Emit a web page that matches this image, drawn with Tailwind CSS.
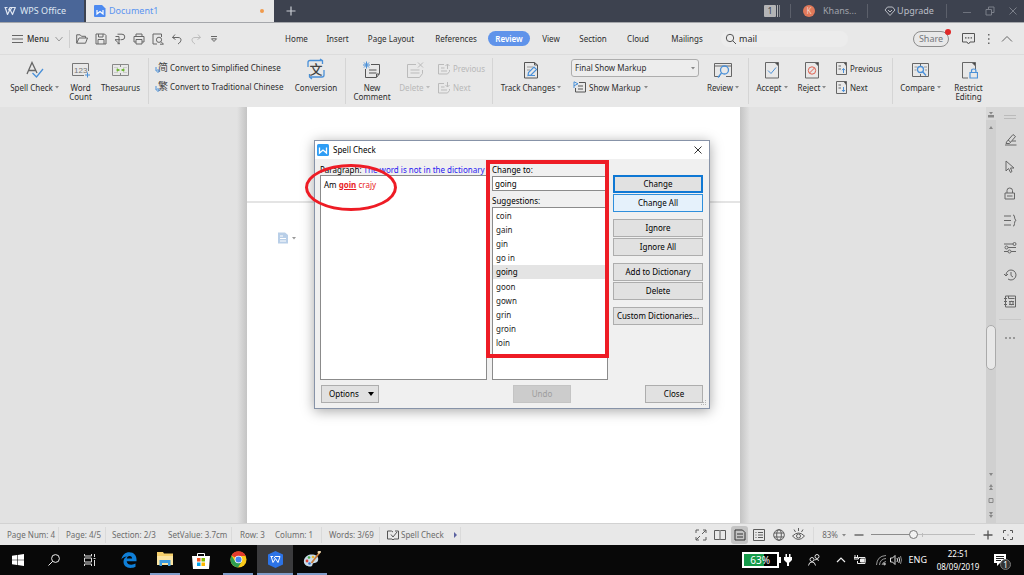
<!DOCTYPE html>
<html lang="en">
<head>
<meta charset="utf-8">
<meta name="viewport" content="width=device-width, initial-scale=1">
<title>Document1 - WPS Office</title>
<script src="https://cdn.jsdelivr.net/npm/@tailwindcss/browser@4"></script>
</head>
<body class="h-screen flex flex-col overflow-hidden bg-[#e2e2e2] font-['Noto_Sans','Open_Sans',sans-serif] text-[8px] leading-3 text-[#2d2d2d] whitespace-nowrap">

<!-- Title bar -->
<header class="h-[22px] shrink-0 flex items-stretch bg-[#3d424f] text-[#b9bcc4]">
  <button class="w-[84px] flex items-center gap-1 pl-1 bg-[#4a6698] text-[9px] text-[#dfe6f2]">
    <svg class="w-3 h-3" viewBox="0 0 12 12" fill="none" stroke="currentColor" stroke-width="1.2" stroke-linejoin="round"><path d="M.5 2.5h3M1.2 2.5l2.3 7 2.5-5 2.5 5L11.3 2.5H6L4.5 5.2M8 2.5l-1.3 2"/></svg>
    WPS Office
  </button>
  <div class="ml-0.5 w-[188px] flex items-center bg-[#e8e8e8] px-2 text-[9px] text-[#5b94f0]">
    <svg class="w-3 h-3 mr-[3px]" viewBox="0 0 12 12"><path d="M1 0h7l3.500 3.500V11a1 1 0 0 1-1 1H1a1 1 0 0 1-1-1V1a1 1 0 0 1 1-1z" fill="#4d8af0"/><path d="M3 5v4l3-2.500L9 9V5" fill="none" stroke="#fff" stroke-width="1.200"/></svg>
    <span class="grow">Document1</span>
    <span class="w-1 h-1 mr-0.5 rounded-full bg-[#f09a4c]"></span>
  </div>
  <button class="w-[34px] flex items-center justify-center" aria-label="New tab">
    <svg class="w-[10px] h-[10px]" viewBox="0 0 10 10" stroke="#c9ccd3" stroke-width="1.200"><path d="M5 .5v9M.5 5h9"/></svg>
  </button>
  <div class="grow"></div>
  <button class="flex items-center" aria-label="Open windows: 1">
    <span class="w-3 h-3 rounded-[1px] bg-[#b4b4b6] text-[#3d424f] text-[9px] text-center leading-3">1</span><span class="ml-px w-px h-3 bg-[#b4b4b6]"></span><span class="ml-px w-px h-3 bg-[#8b8d94]"></span>
  </button>
  <span class="w-px my-1 ml-2.5 bg-[#5c606b]"></span>
  <button class="w-[76px] flex items-center pl-3 gap-2 text-[9px] text-[#a0a3ab]">
    <span class="w-3 h-3 rounded-full bg-[#e0795a] text-[8px] leading-3 text-center text-[#f3cdbf]">K</span>Khans...
  </button>
  <span class="w-px my-1 bg-[#5c606b]"></span>
  <button class="w-[78px] flex items-center justify-center gap-px pl-1 text-[9px]">
    <svg class="w-3 h-3" viewBox="0 0 12 12" fill="none" stroke="currentColor" stroke-linejoin="round"><path d="M3.500 2h5L11 5l-5 5.500L1 5zM4 5l2 2 2-2"/></svg>Upgrade
  </button>
  <span class="w-px my-1 mr-4 bg-[#5c606b]"></span>
  <button aria-label="Minimize"><svg class="w-2 h-2.5" viewBox="0 0 8 10" stroke="#6e727d"><path d="M0 6.500h8"/></svg></button>
  <button class="ml-[14px]" aria-label="Restore"><svg class="w-2.5 h-2.5" viewBox="0 0 10 10" fill="none" stroke="#7b7f89"><path d="M1 3.500h5.500V9H1zM3.500 3.500V1H9v5.500H6.500"/></svg></button>
  <button class="ml-[13px] mr-1.5" aria-label="Close window"><svg class="w-2.5 h-2.5" viewBox="0 0 10 10" stroke="#7b7f89"><path d="M1.500 1.500l7 7M8.500 1.500l-7 7"/></svg></button>
</header>

<!-- Menu bar -->
<nav class="h-8 shrink-0 flex items-center border-t border-[#a5a7ab] bg-[#e8e8e8]">
  <button class="flex items-center w-[70px] h-[18px] pl-3 border-r border-[#cfcfcf]">
    <svg class="w-3 h-2.5" viewBox="0 0 12 10" stroke="#666"><path d="M0 1.500h11M0 5h11M0 8.500h11"/></svg>
    <span class="ml-[3px] w-7 text-left font-medium">Menu</span>
    <svg class="w-2 h-2" viewBox="0 0 8 8" fill="none" stroke="#999"><path d="M.5 2L4 6l3.500-4"/></svg>
  </button>
  <div class="flex items-center pl-1.5 gap-[7px] w-[206px] text-[#666]">
    <button aria-label="Open"><svg class="w-3 h-3" viewBox="0 0 12 12" fill="none" stroke="currentColor"><path d="M.7 10V1.800h3.500l1.300 1.500h4V5M.7 10.200L3 5h8.500L9.500 10.200z"/></svg></button>
    <button aria-label="Save"><svg class="w-3 h-3" viewBox="0 0 12 12" fill="none" stroke="currentColor"><path d="M1 1h8.500L11 2.500V11H1zM3.500 1v3h4.500V1M3 11V6.500h6V11"/></svg></button>
    <button aria-label="Export to PDF"><svg class="w-3 h-3" viewBox="0 0 12 12" fill="none" stroke="currentColor"><path d="M3.500 1.200H8a2.500 2.500 0 0 1 0 5.500H6.500M1.500 3.500h3.500v7L1 6.700h5M3.500 10.700H6"/></svg></button>
    <button aria-label="Print"><svg class="w-3 h-3" viewBox="0 0 12 12" fill="none" stroke="currentColor"><path d="M3 3.500V1h6v2.500M3 9H1V3.500h10V9H9M3 6.500h6V11H3z"/></svg></button>
    <button aria-label="Print preview"><svg class="w-3 h-3" viewBox="0 0 12 12" fill="none" stroke="currentColor"><path d="M5 11H1V1h8.500v3"/><circle cx="7" cy="6.800" r="2.600"/><path d="M9 8.700l2.500 2.500H8"/></svg></button>
    <button aria-label="Undo"><svg class="w-3 h-3" viewBox="0 0 12 12" fill="none" stroke="currentColor"><path d="M4 1.500L1.500 4.500l3 2M1.500 4.500H7c4 0 4 4 0 6.500"/></svg></button>
    <button aria-label="Redo" disabled class="text-[#bdbdbd]"><svg class="w-3 h-3" viewBox="0 0 12 12" fill="none" stroke="currentColor"><path d="M8 1.500l2.500 3-3 2M10.500 4.500H5c-4 0-4 4 0 6.500"/></svg></button>
    <button aria-label="Customize toolbar"><svg class="w-3 h-3" viewBox="0 0 12 12" fill="none" stroke="currentColor"><path d="M2 3.500h6M2.500 5.800L5 8.500l2.500-2.700z"/></svg></button>
  </div>
  <div class="flex items-center text-center">
    <button class="w-[41px]">Home</button>
    <button class="w-[41px]">Insert</button>
    <button class="w-[66px]">Page Layout</button>
    <button class="w-[64px]">References</button>
    <button class="w-[42px] h-[15px] mr-0.5 rounded-full bg-[#5f93ea] text-white font-semibold">Review</button>
    <button class="w-[38px]">View</button>
    <button class="w-[46px]">Section</button>
    <button class="w-[44px]">Cloud</button>
    <button class="w-[54px]">Mailings</button>
  </div>
  <label class="ml-[7px] w-[127px] h-4 flex items-center gap-0.5 px-1 rounded-full bg-[#ececec]">
    <svg class="w-3 h-3" viewBox="0 0 12 12" fill="none" stroke="#555"><circle cx="5" cy="5" r="3.700"/><path d="M7.700 7.700L11 11"/></svg>
    <input class="w-24 text-[9px] outline-none" value="mail" aria-label="Search commands">
  </label>
  <div class="grow"></div>
  <button class="relative w-9 h-4 rounded-full border border-[#8c8c8c] text-[9px] text-[#75777c]">Share<span class="absolute -top-[3px] -right-[3px] w-1.5 h-1.5 rounded-full bg-[#e02828]"></span></button>
  <button class="ml-[13px]" aria-label="Comments"><svg class="w-[13px] h-[13px]" viewBox="0 0 13 13" fill="none" stroke="#555"><path d="M.5 1.500h12v8.500H8L6.500 12 5 10H.5z"/><path d="M3 5.800h1.500M5.800 5.800h1.500M8.600 5.800H10" stroke-width="1.300"/></svg></button>
  <button class="ml-3" aria-label="More"><svg class="w-1 h-3" viewBox="0 0 4 12" fill="#666"><path d="M1 1h1.500v1.500H1zM1 5.200h1.500v1.500H1zM1 9.400h1.500v1.500H1z"/></svg></button>
  <button class="ml-2.5 mr-[11px]" aria-label="Collapse ribbon"><svg class="w-3 h-2" viewBox="0 0 12 8" fill="none" stroke="#666"><path d="M1 6.500l5-5 5 5"/></svg></button>
</nav>

<!-- Ribbon -->
<section class="h-[53px] shrink-0 flex items-stretch border-t border-[#dcdcdc] bg-[#e8e8e8] leading-[9px]" aria-label="Review ribbon">
  <div class="flex my-[3px] w-[149px] pl-[7px] border-r border-[#d5d5d5]">
    <button class="w-[55px] flex flex-col items-center pt-[3px] gap-1">
      <svg class="w-[18px] h-[18px]" viewBox="0 0 18 18" fill="none"><path d="M1 13L6 1.500 11 12M2.500 9.500h7" stroke="#666" stroke-width="1.300"/><path d="M6.500 12l4 4L17 8" stroke="#4a90d8" stroke-width="1.300"/></svg>
      <span>Spell Check <svg class="inline w-1 h-1 mb-1" viewBox="0 0 4 4" fill="#888"><path d="M0 1h4L2 3.500z"/></svg></span>
    </button>
    <button class="w-[37px] flex flex-col items-center pt-[3px] gap-1">
      <svg class="w-[20px] h-[18px]" viewBox="0 0 20 18" fill="none" stroke="#777"><path d="M13 14.500H1.500v-12h16V10"/><text x="3" y="12" font-size="8" font-family="Liberation Sans" fill="#777" stroke="none">123</text><path d="M16.500 11.500v5M14 14h5" stroke="#4a90d8"/></svg>
      <span>Word<br>Count</span>
    </button>
    <button class="w-[43px] flex flex-col items-center pt-[3px] gap-1">
      <svg class="w-[18px] h-[18px]" viewBox="0 0 18 18" fill="none" stroke="#888"><path d="M.5 3.500h16v11H.5zM8.500 3.500v2.500M8.500 12v2.500"/><path d="M2 6.500h4M11 6.500h4M2 11.500h4M11 11.500h4" stroke="#ccc"/><path d="M5 7.800L7.500 9 5 10.200zM12 7.800L9.500 9l2.500 1.200z" fill="#6ab42d" stroke="#6ab42d" stroke-width=".8"/></svg>
      <span>Thesaurus</span>
    </button>
  </div>
  <div class="flex my-[3px] w-[197px] pl-1.5 border-r border-[#d5d5d5]">
    <div class="w-[134px] flex flex-col items-start pt-0.5 gap-[5px]">
      <button class="flex items-center gap-px h-[14px]"><svg class="w-3.5 h-3.5 overflow-visible" viewBox="0 0 14 14" fill="none" stroke="#4a90d8"><text x="3" y="11" font-size="10" font-family="Noto Sans CJK SC" fill="#444" stroke="none">简</text><path d="M1 7v4h3M2.500 9L4.500 11l-2 2"/></svg>Convert to Simplified Chinese</button>
      <button class="flex items-center gap-px h-[14px]"><svg class="w-3.5 h-3.5 overflow-visible" viewBox="0 0 14 14" fill="none" stroke="#4a90d8"><text x="3" y="11" font-size="10" font-family="Noto Sans CJK TC" fill="#444" stroke="none">繁</text><path d="M1 7v4h3M2.500 9L4.500 11l-2 2"/></svg>Convert to Traditional Chinese</button>
    </div>
    <button class="w-[54px] flex flex-col items-center pt-px gap-1">
      <svg class="w-5 h-5 overflow-visible" viewBox="0 0 20 20" fill="none" stroke="#4a90d8" stroke-width="1.300"><path d="M2 8V3.500q0-2 2-2h12M14 0l2.500 1.500V5M18 11v5q0 2-2 2H4M6 20l-2.500-2V15"/><text x="3.500" y="14.500" font-size="13" font-family="Noto Sans CJK SC" font-weight="500" fill="#444" stroke="none">文</text></svg>
      <span>Conversion</span>
    </button>
  </div>
  <div class="flex my-[3px] w-[147px] pl-1.5 border-r border-[#d5d5d5]">
    <button class="w-10 flex flex-col items-center pt-[3px] gap-1">
      <svg class="w-[18px] h-[18px]" viewBox="0 0 18 18" fill="none" stroke="#555"><path d="M8 3.500h8.500v9l-3 4H2.500V8M6 9h7.500M6 12h7.500M16.500 13h-3v3"/><path d="M3.500.5v7M0 4h7M1 1.500l5 5M6 1.500l-5 5" stroke="#4a90d8"/></svg>
      <span>New<br>Comment</span>
    </button>
    <button disabled class="w-[45px] flex flex-col items-center pt-[3px] gap-1 text-[#b8b8b8]">
      <svg class="w-[18px] h-[18px]" viewBox="0 0 18 18" fill="none" stroke="#bbb"><path d="M10 3.500H1.500v13h12l3-4V9M4.500 9h9M4.500 12h9M12 1.500l5 5M17 1.500l-5 5"/></svg>
      <span>Delete <svg class="inline w-1 h-1 mb-1" viewBox="0 0 4 4" fill="#bbb"><path d="M0 1h4L2 3.500z"/></svg></span>
    </button>
    <div class="flex flex-col items-start pl-px pt-1 gap-1.5 text-[#b8b8b8]">
      <button disabled class="flex items-center gap-[3px] h-[13px]"><svg class="w-3 h-3" viewBox="0 0 12 12" fill="none" stroke="#bbb"><path d="M6 1.500H.5V11h9l2-2.500V7M3 5h3.500M3 8h6M9.500 6V1M7.500 3l2-2 2 2"/></svg>Previous</button>
      <button disabled class="flex items-center gap-[3px] h-[13px]"><svg class="w-3 h-3" viewBox="0 0 12 12" fill="none" stroke="#bbb"><path d="M6 1.500H.5V11h9l2-2.500V7M3 5h3.500M3 8h6M9.500 0v5M7.500 3l2 2 2-2"/></svg>Next</button>
    </div>
  </div>
  <div class="flex my-[3px] w-[256px] pl-[5px] border-r border-[#d5d5d5]">
    <button class="w-[66px] flex flex-col items-center pt-[3px] gap-1">
      <svg class="w-[18px] h-[18px]" viewBox="0 0 18 18" fill="none" stroke="#555"><path d="M2.500 1.500h10l3 2.500v13h-13zM12.500 1.500V4h3"/><path d="M5 6h6M5 9h3" stroke="#999"/><path d="M6 14.500l.5-3L12 6l2.500 2.500L9 14zM5.500 14.500H13" stroke="#4a90d8" stroke-width="1.200"/></svg>
      <span>Track Changes <svg class="inline w-1 h-1 mb-1" viewBox="0 0 4 4" fill="#888"><path d="M0 1h4L2 3.500z"/></svg></span>
    </button>
    <div class="w-[131px] pl-[7px] pt-px flex flex-col items-start gap-[3px]">
      <div class="relative w-32">
        <select class="block appearance-none w-full h-[18px] pl-[3px] rounded-[3px] border border-[#adadad] bg-[#ededed] leading-4" aria-label="Markup display"><option>Final Show Markup</option></select>
        <svg class="absolute right-1 top-[7px] w-1 h-1 pointer-events-none" viewBox="0 0 4 4" fill="#888"><path d="M0 1h4L2 3.500z"/></svg>
      </div>
      <button class="flex items-center gap-[3px] h-[14px] pl-0.5"><svg class="w-[13px] h-3" viewBox="0 0 13 12" fill="none" stroke="#555"><path d="M6 1.500h6.500v9.500h-10V7M5 5h5M5 8h5"/><path d="M1 7V.8l4 2-4 2" stroke="#4a90d8"/></svg>Show Markup <svg class="w-1 h-1" viewBox="0 0 4 4" fill="#888"><path d="M0 1h4L2 3.500z"/></svg></button>
    </div>
    <button class="w-[40px] ml-2 flex flex-col items-center pt-[3px] gap-1">
      <svg class="w-[18px] h-[18px]" viewBox="0 0 18 18" fill="none" stroke="#666"><path d="M6 15.500H.5v-13h17v13H12M.5 5h17"/><g stroke="#4a90d8" stroke-width="1.300"><circle cx="10.500" cy="9" r="4"/><path d="M7.500 12L4 16.500"/></g></svg>
      <span>Review <svg class="inline w-1 h-1 mb-1" viewBox="0 0 4 4" fill="#888"><path d="M0 1h4L2 3.500z"/></svg></span>
    </button>
  </div>
  <div class="flex my-[3px] w-[144px] pl-[3px] border-r border-[#d5d5d5]">
    <button class="w-10 flex flex-col items-center pt-[3px] gap-1">
      <svg class="w-[18px] h-[18px]" viewBox="0 0 18 18" fill="none" stroke="#666"><path d="M2.500 1.500h10l3 2.500v13h-13z"/><path d="M12 1.500h3.500V5z" fill="#444"/><path d="M5 9.500l3 3 5-6" stroke="#4a90d8"/></svg>
      <span>Accept <svg class="inline w-1 h-1 mb-1" viewBox="0 0 4 4" fill="#888"><path d="M0 1h4L2 3.500z"/></svg></span>
    </button>
    <button class="w-10 flex flex-col items-center pt-[3px] gap-1">
      <svg class="w-[18px] h-[18px]" viewBox="0 0 18 18" fill="none" stroke="#666"><path d="M2.500 1.500h10l3 2.500v13h-13z"/><path d="M12 1.500h3.500V5z" fill="#444"/><g stroke="#e0604f"><circle cx="9" cy="9.500" r="3.700"/><path d="M6.500 12l5-5"/></g></svg>
      <span>Reject <svg class="inline w-1 h-1 mb-1" viewBox="0 0 4 4" fill="#888"><path d="M0 1h4L2 3.500z"/></svg></span>
    </button>
    <div class="flex flex-col items-start pl-1 pt-1 gap-1.5">
      <button class="flex items-center gap-0.5 h-[13px]"><svg class="w-3 h-[13px]" viewBox="0 0 12 13" fill="none" stroke="#666"><path d="M.5.500h8L10.500 3v9.500H.5zM2.500 4H5M2.500 7H5"/><path d="M8 .5h2.500V4z" fill="#444"/><path d="M7.500 11V6.500M6 8.200l1.500-1.700L9 8.200" stroke="#4a90d8"/></svg>Previous</button>
      <button class="flex items-center gap-0.5 h-[13px]"><svg class="w-3 h-[13px]" viewBox="0 0 12 13" fill="none" stroke="#666"><path d="M.5.500h8L10.500 3v9.500H.5zM2.500 4H5M2.500 7H5"/><path d="M8 .5h2.500V4z" fill="#444"/><path d="M7.500 6v4.500M6 9l1.500 1.700L9 9" stroke="#4a90d8"/></svg>Next</button>
    </div>
  </div>
  <div class="flex my-[3px] pl-1">
    <button class="w-[47px] flex flex-col items-center pt-[3px] gap-1">
      <svg class="w-[18px] h-[18px]" viewBox="0 0 18 18" fill="none" stroke="#666"><path d="M.5 2.500h16v13H.5zM8.500 2.500V5M8.500 13v2.500"/><path d="M2.500 6h3M2.500 9h2M12 6h3M13 9h2" stroke="#999"/><g stroke="#4a90d8" stroke-width="1.300"><circle cx="8.500" cy="8.500" r="3"/><path d="M10.500 10.500l3.500 4"/></g></svg>
      <span>Compare <svg class="inline w-1 h-1 mb-1" viewBox="0 0 4 4" fill="#888"><path d="M0 1h4L2 3.500z"/></svg></span>
    </button>
    <button class="w-[49px] flex flex-col items-center pt-[3px] gap-1">
      <svg class="w-[18px] h-[18px]" viewBox="0 0 18 18" fill="none" stroke="#666"><path d="M8 17H2.500V1.500h10L15.500 4v4"/><path d="M12 1.500h3.500V5z" fill="#444"/><path d="M10 11.500h7.500V17H10zM11.500 11.500V9.800q0-1.800 2.200-1.800t2.200 1.800v1.700" stroke="#4a90d8" stroke-width="1.200"/></svg>
      <span>Restrict<br>Editing</span>
    </button>
  </div>
</section>

<!-- Workspace -->
<main class="relative grow min-h-0 flex">
  <div class="grow flex justify-center min-w-0">
    <div class="flex items-stretch">
      <div class="w-2.5 bg-linear-to-r from-[#e2e2e2] to-[#c4c4c4]"></div>
      <article class="w-[493px] bg-white" aria-label="Document page">
        <div class="h-24 border-b-2 border-[#e4e4e4]"></div>
        <button class="flex items-center gap-1 pt-[29px] pl-[31px]" aria-label="Paste options"><svg class="w-2.5 h-3" viewBox="0 0 10 12"><path d="M0 .5h7L10 3v8.500H0z" fill="#b9cfe8"/><path d="M2 4h3M2 6.500h6M2 9h6" stroke="#fff"/></svg><svg class="w-1 h-1" viewBox="0 0 4 4" fill="#999"><path d="M0 1h4L2 3.500z"/></svg></button>
      </article>
      <div class="w-2.5 bg-linear-to-l from-[#e2e2e2] to-[#c4c4c4]"></div>
    </div>
  </div>

  <!-- Scrollbar -->
  <div class="w-2.5 shrink-0 flex flex-col items-center bg-[#d0d0d0]" role="scrollbar" aria-controls="side" aria-valuenow="60">
    <svg class="w-2.5 h-[13px] bg-[#d8d8d8]" viewBox="0 0 10 13" fill="#888"><path d="M3 5h4L5 7.500zM2 8h6v2.500H2z"/></svg>
    <svg class="w-2.5 h-3" viewBox="0 0 10 12" fill="#888"><path d="M3 9h4L5 6z"/></svg>
    <div class="grow-[193]"></div>
    <div class="w-2.5 h-[45px] rounded-full border border-[#aaa] bg-[#e8e8e8]"></div>
    <div class="grow-[101]"></div>
    <svg class="w-2.5 h-[52px]" viewBox="0 0 10 52" fill="#888"><path d="M3 2h4L5 5zM3 16l2-3 2 3zM3 19l2-3 2 3zM3 41h4l-2 3zM3 44h4l-2 3z"/><path d="M3 27.500h4v4H3z" fill="none" stroke="#888"/></svg>
  </div>

  <!-- Side toolbar -->
  <aside id="side" class="w-7 shrink-0 flex flex-col items-center bg-[#d8d8d8] pt-2 text-[#666]">
    <svg class="w-3 h-1" viewBox="0 0 12 4" stroke="#bbb"><path d="M0 .5h12M0 3.500h12"/></svg>
    <div class="mt-[14px] flex flex-col gap-[14px]">
      <button class="h-[13px]" aria-label="Edit"><svg class="w-[13px] h-[13px]" viewBox="0 0 13 13" fill="none" stroke="currentColor"><path d="M2.500 9L9 1.500l2.500 2L5.500 10.500H2zM1 12h11.500M8 8h4M4 7l2.500 2"/></svg></button>
      <button class="h-[13px]" aria-label="Select"><svg class="w-[13px] h-[13px]" viewBox="0 0 13 13" fill="none" stroke="currentColor"><path d="M2 1v10l2.500-2.500L6.500 12.500 8 11.500 6.500 8H10z"/></svg></button>
      <button class="h-[13px]" aria-label="Protect"><svg class="w-[13px] h-[13px]" viewBox="0 0 13 13" fill="none" stroke="currentColor"><path d="M1 6h9.500v6H1zM3 6V3.500Q3 1 5.700 1t2.800 2.500V6M3 9h5.500"/></svg></button>
      <button class="h-[13px]" aria-label="Styles"><svg class="w-[13px] h-[13px]" viewBox="0 0 13 13" fill="none" stroke="currentColor"><path d="M0 2h7M0 6.500h7M0 11h7M9 1q1.500 0 1.500 2T12 6.500Q10.500 6.500 10.500 9.500T9 12"/></svg></button>
      <button class="h-[13px]" aria-label="Settings"><svg class="w-[13px] h-[13px]" viewBox="0 0 13 13" fill="none" stroke="currentColor"><path d="M0 3h9M4 6.500h8M0 10.500h4M7 10.500h5"/><circle cx="10.500" cy="3" r="1.500"/><circle cx="2.500" cy="6.500" r="1.500"/><circle cx="5.500" cy="10.500" r="1.500"/></svg></button>
      <button class="h-[13px]" aria-label="History"><svg class="w-[13px] h-[13px]" viewBox="0 0 13 13" fill="none" stroke="currentColor"><path d="M2 7a5 5 0 1 1 2 4M0 6l2 2 2-2M7 4v3.500l2 1.500"/></svg></button>
      <button class="h-[13px]" aria-label="Backup"><svg class="w-[13px] h-[13px]" viewBox="0 0 13 13" fill="none" stroke="currentColor"><path d="M1.500 1h10v11h-10zM0 3.500h3M0 6.500h3M0 9.500h3M4.500 1v2.500h6"/><path d="M5 6.500h5M5 9.500h5"/><circle cx="7.500" cy="8" r="1.700"/></svg></button>
    </div>
    <span class="mt-[11px] w-[22px] h-px bg-[#c8c8c8]"></span>
    <button class="mt-4" aria-label="More tools"><svg class="block w-3 h-1" viewBox="0 0 12 4" fill="#999"><path d="M1 1h2v2H1zM5 1h2v2H5zM9 1h2v2H9z"/></svg></button>
  </aside>

  <!-- Spell check dialog -->
  <section role="dialog" aria-label="Spell Check" class="absolute left-[314px] top-[33px] w-[396px] border border-[#8793a8] bg-[#f0f0f0] text-black shadow-[0_2px_12px_rgba(0,0,0,0.35)]">
    <div class="h-[18px] flex items-center bg-white pl-0.5 pr-1.5">
      <svg class="w-3 h-3 mr-1" viewBox="0 0 12 12"><rect width="12" height="12" rx="1.500" fill="#2e9df5"/><path d="M2.500 3.500v5.500L6 6l3.500 3V3.500" fill="none" stroke="#fff" stroke-width="1.300"/></svg>
      <h1 class="grow">Spell Check</h1>
      <button aria-label="Close dialog"><svg class="block w-2.5 h-2.5" viewBox="0 0 10 10" stroke="#333"><path d="M1.500 1.500l7 7M8.500 1.500l-7 7"/></svg></button>
    </div>
    <div class="flex gap-[5px] pl-[5px] pr-1.5 pt-1">
      <div class="w-[167px] flex flex-col">
        <p class="h-3 leading-[14px]">Paragraph: <span class="text-[#2a1af0]">The word is not in the dictionary</span></p>
        <div class="h-[205px] border border-[#8b8b8b] bg-white px-[3px] pt-1 leading-2.5" role="textbox" aria-label="Paragraph">Am <b class="text-[#e81c24] underline">goin</b> <span class="text-[#e81c24]">crajy</span></div>
      </div>
      <div class="w-[116px] flex flex-col">
        <label for="change" class="h-[13px] leading-[14px]">Change to:</label>
        <input id="change" value="going" class="h-[15px] border border-[#8b8b8b] bg-white px-0.5 outline-none">
        <p class="h-4 pt-1" id="sug">Suggestions:</p>
        <ul class="h-[173px] border border-[#8b8b8b] bg-white pt-px leading-[14px] text-[#222]" role="listbox" aria-labelledby="sug">
          <li class="h-[14px] px-[3px]" role="option">coin</li>
          <li class="h-[14px] px-[3px]" role="option">gain</li>
          <li class="h-[14px] px-[3px]" role="option">gin</li>
          <li class="h-[14px] px-[3px]" role="option">go in</li>
          <li class="h-[14px] px-[3px] bg-[#e4e4e4] text-black" role="option" aria-selected="true">going</li>
          <li class="h-[14px] mt-px px-[3px]" role="option">goon</li>
          <li class="h-[14px] px-[3px]" role="option">gown</li>
          <li class="h-[14px] px-[3px]" role="option">grin</li>
          <li class="h-[14px] px-[3px]" role="option">groin</li>
          <li class="h-[14px] px-[3px]" role="option">loin</li>
        </ul>
      </div>
      <div class="w-[90px] flex flex-col gap-px pt-3">
        <button class="h-[18px] border-2 border-[#0f78d4] bg-[#e1e1e1]">Change</button>
        <button class="h-[18px] border border-[#2f8fdc] bg-[#e5f1fb]">Change All</button>
        <button class="h-[18px] mt-1.5 border border-[#adadad] bg-[#e1e1e1]">Ignore</button>
        <button class="h-[18px] border border-[#adadad] bg-[#e1e1e1]">Ignore All</button>
        <button class="h-[18px] mt-1.5 border border-[#adadad] bg-[#e1e1e1]">Add to Dictionary</button>
        <button class="h-[18px] border border-[#adadad] bg-[#e1e1e1]">Delete</button>
        <button class="h-[18px] mt-1.5 border border-[#adadad] bg-[#e1e1e1]">Custom Dictionaries...</button>
      </div>
    </div>
    <div class="flex pl-1.5 pr-1.5 pt-[5px] pb-[5px]">
      <button class="w-[58px] h-[18px] flex items-center justify-between pl-[7px] pr-1 border border-[#adadad] bg-[#e1e1e1]">Options <svg class="w-1.5 h-1.5" viewBox="0 0 6 6"><path d="M0 1h6L3 5z"/></svg></button>
      <button disabled class="w-[58px] h-[18px] ml-[134px] border border-[#c4c4c4] bg-[#cccccc] text-[#9d9d9d]">Undo</button>
      <button class="w-[58px] h-[18px] ml-auto border border-[#adadad] bg-[#e1e1e1]">Close</button>
    </div>
    <svg class="absolute right-0.5 bottom-0.5 w-1.5 h-1.5" viewBox="0 0 6 6" fill="#b5b5b5"><path d="M4 0h1v1H4zM2 2h1v1H2zM4 2h1v1H4zM0 4h1v1H0zM2 4h1v1H2zM4 4h1v1H4z"/></svg>
    <!-- Highlight marks -->
    <span class="absolute left-[-10px] top-[23px] w-[92px] h-[47px] rounded-[50%] border-[3px] border-[#ee1c25]"></span>
    <span class="absolute left-[171px] top-[19px] w-[123px] h-[198px] border-4 border-[#ee1c25]"></span>
  </section>
</main>

<!-- Status bar -->
<footer class="h-[22px] shrink-0 flex items-center border-t border-[#d2d2d2] bg-[#e8e8e8] text-[#6c6c6c]">
  <span class="w-[59px] pl-[7px] h-4 leading-4 border-r border-[#dadada]">Page Num: 4</span>
  <span class="w-[47px] pl-[7px] h-4 leading-4 border-r border-[#dadada]">Page: 4/5</span>
  <span class="w-[55px] pl-1.5 leading-4">Section: 2/3</span>
  <span class="w-[71px] pl-[7px] h-4 leading-4 border-r border-[#dadada]">SetValue: 3.7cm</span>
  <span class="w-[35px] pl-2 leading-4">Row: 3</span>
  <span class="w-[55px] pl-2 h-4 leading-4 border-r border-[#dadada]">Column: 1</span>
  <span class="w-[58px] pl-[7px] h-4 leading-4 border-r border-[#dadada]">Words: 3/69</span>
  <button class="w-[81px] pl-[7px] h-4 flex items-center border-r border-[#dadada]"><svg class="w-3 h-3 mr-0.5" viewBox="0 0 12 12" fill="none" stroke="#555"><path d="M6 3L4.500 2H.5v8H5l1 1 1-1h4.500V2H8M4 5.500l2 2.500 4-5"/></svg>Spell Check<svg class="w-1 h-2 ml-2.5" viewBox="0 0 4 8" fill="#5b62a0"><path d="M0 1l3 3-3 3z"/></svg></button>
  <div class="grow"></div>
  <div class="flex items-center gap-0.5 text-[#5c5c5c]">
    <button class="w-[17px] h-[18px] flex items-center justify-center" aria-label="Full screen"><svg class="w-3 h-3" viewBox="0 0 12 12" fill="none" stroke="currentColor"><path d="M1 4V1h3M8 1h3v3M11 8v3H8M4 11H1V8M7 5l4-4M5 7l-4 4"/></svg></button>
    <button class="w-[18px] h-[18px] flex items-center justify-center" aria-label="Reading view"><svg class="w-3 h-3" viewBox="0 0 12 12" fill="none" stroke="currentColor"><path d="M.5 1.500h5L6 2l.5-.5h5v9h-5L6 11l-.5-.5h-5zM6 2v9"/></svg></button>
    <button class="w-[17px] h-[18px] flex items-center justify-center rounded-[3px] bg-[#c4c4c4]" aria-label="Page view"><svg class="w-3 h-3" viewBox="0 0 12 12" fill="none" stroke="#333"><path d="M1 1h7.500L11 3.500V11H1zM3 5h6M3 8h6"/></svg></button>
    <button class="w-[18px] h-[18px] flex items-center justify-center" aria-label="Outline view"><svg class="w-3 h-3" viewBox="0 0 12 12" fill="none" stroke="currentColor"><path d="M.5.500h11v11H.5zM2.500 3.500h1M5 3.500h5M2.500 6h1M5 6h5M2.500 8.500h1M5 8.500h5"/></svg></button>
    <button class="w-[17px] h-[18px] flex items-center justify-center" aria-label="Web view"><svg class="w-3 h-3" viewBox="0 0 12 12" fill="none" stroke="currentColor"><circle cx="6" cy="6" r="5.300"/><ellipse cx="6" cy="6" rx="2.300" ry="5.300"/><path d="M1 4h10M1 8h10"/></svg></button>
    <button class="w-[18px] h-[18px] flex items-center justify-center" aria-label="Eye protection"><svg class="w-[13px] h-[13px]" viewBox="0 0 13 13" fill="none" stroke="currentColor"><path d="M.5 8q6-6 12 0-6 7-12 0zM6.500 0v3M2 1.500L3.500 4M11 1.500L9.500 4"/><circle cx="6.500" cy="8" r="2"/></svg></button>
  </div>
  <span class="ml-1.5 w-px h-4 bg-[#dadada]"></span>
  <button class="ml-2 flex items-center gap-1">83% <svg class="w-1 h-1" viewBox="0 0 4 4" fill="#888"><path d="M0 1h4L2 3.500z"/></svg></button>
  <button class="ml-2" aria-label="Zoom out"><svg class="block w-2.5 h-2.5" viewBox="0 0 10 10" stroke="#555" stroke-width="1.300"><path d="M.5 5h9"/></svg></button>
  <div class="relative ml-[7px] w-[104px] h-3 flex items-center">
    <span class="w-full h-px bg-[#bdbdbd]"></span>
    <span class="absolute left-0 w-10 h-px bg-[#8c8c8c]"></span>
    <span class="absolute left-[51px] w-px h-1 bg-[#bdbdbd]"></span>
    <input type="range" min="0" max="100" value="40" aria-label="Zoom" class="absolute inset-0 w-full opacity-0">
    <span class="absolute left-[38px] w-[9px] h-[9px] rounded-full border border-[#777] bg-[#f2f2f2] pointer-events-none"></span>
  </div>
  <button class="ml-2" aria-label="Zoom in"><svg class="block w-2.5 h-2.5" viewBox="0 0 10 10" stroke="#555" stroke-width="1.300"><path d="M.5 5h9M5 .5v9"/></svg></button>
  <button class="ml-2.5 mr-[11px]" aria-label="Fit page"><svg class="block w-2.5 h-2.5" viewBox="0 0 10 10" fill="none" stroke="#555"><path d="M.5 3V.5H3M7 .5h2.500V3M9.500 7v2.500H7M3 9.500H.5V7M4.500 5h1"/></svg></button>
</footer>

<!-- Taskbar -->
<div class="h-[30px] shrink-0 flex items-stretch bg-[#080808] text-white">
  <button class="w-9 flex items-center justify-center" aria-label="Start"><svg class="w-3 h-3" viewBox="0 0 12 12" fill="#fff"><path d="M0 1.700l5-.7v4.700H0zM5.600.9L12 0v5.700H5.600zM0 6.300h5V11l-5-.7zM5.600 6.300H12V12l-6.400-.9z"/></svg></button>
  <button class="w-9 flex items-center justify-center" aria-label="Search"><svg class="w-3 h-3" viewBox="0 0 12 12" fill="none" stroke="#eee"><circle cx="7.500" cy="4.500" r="3.900"/><path d="M4.700 7.300L.5 11.500"/></svg></button>
  <button class="w-9 flex items-center justify-center" aria-label="Task view"><svg class="w-3 h-3" viewBox="0 0 12 12" fill="none" stroke="#ddd"><path d="M.5 0v2h7V0M.5 4h7v4h-7zM.5 12v-2h7v2M10.500 0v3M10.500 6v6M9.500 4.500h2"/></svg></button>
  <button class="w-[42px] flex items-center justify-center" aria-label="Edge"><svg class="w-4 h-4" viewBox="0 0 16 16"><path d="M.5 7.500C1 3 4.300.3 8.300.3c4.700 0 7.200 3.400 7.200 7.200V9.200H5.700c.2 2.500 2.200 3.500 4.600 3.500 1.600 0 3-.4 4.200-1.100v3.100c-1.300.8-3 1.200-5 1.200C5 15.900 2.500 13.400 2.500 9.800c0-2.400 1.300-4.300 3.300-5.300C3.300 4.600 1.500 5.900.5 7.500zM5.800 6.600h5.300c0-1.600-.8-2.700-2.500-2.700S6 5 5.800 6.600z" fill="#0f7fd8"/></svg></button>
  <button class="w-[30px] flex items-center justify-center border-b-2 border-[#7f9cc8]" aria-label="File Explorer"><svg class="w-4 h-3.5" viewBox="0 0 16 14"><path d="M0 0h6l1 1.500h9V13H0z" fill="#f5cf6b"/><path d="M0 4h16v9H0z" fill="#fbe3a0"/><path d="M2.500 14V8h11v6H11v-3H5v3z" fill="#3d9be0"/></svg></button>
  <button class="w-[42px] flex items-center justify-center" aria-label="Store"><svg class="w-[18px] h-[17px]" viewBox="0 0 18 17"><path d="M5.500 5V1.500h7V5" fill="none" stroke="#fff"/><path d="M0 4h18l-1 13H1z" fill="#fff"/><path d="M5 6h3.500v3.500H5z" fill="#f25022"/><path d="M9.500 6H13v3.500H9.500z" fill="#7fba00"/><path d="M5 10.500h3.500V14H5z" fill="#00a4ef"/><path d="M9.500 10.500H13V14H9.500z" fill="#ffb900"/></svg></button>
  <button class="ml-px w-[30px] flex items-center justify-center border-b-2 border-[#7f9cc8]" aria-label="Chrome"><svg class="w-[17px] h-[17px]" viewBox="0 0 18 18"><circle cx="9" cy="9" r="8.500" fill="#fbc91a"/><path d="M9 9L1.600 4.700A8.500 8.500 0 0 1 16.400 4.700L16.700 5.300H9z" fill="#e23b2e"/><path d="M9 9l3.500 2-4 6.500A8.500 8.500 0 0 1 1.600 4.700L5.500 11z" fill="#2f9e4f"/><circle cx="9" cy="9" r="4" fill="#fff"/><circle cx="9" cy="9" r="3.200" fill="#4485ee"/></svg></button>
  <button class="ml-1 w-9 flex items-center justify-center bg-[#3b3b3d] border-b-2 border-[#7f9cc8]" aria-label="WPS Office"><svg class="w-[17px] h-[17px]" viewBox="0 0 17 17"><path d="M8.500 0L16 3.500v10L8.500 17 1 13.500v-10z" fill="#2c73e6"/><path d="M3.500 5.500h2.700M4.200 5.500L6 11.500l2.500-4 2.500 4 2-6H8L7 7.500" fill="none" stroke="#fff"/></svg></button>
  <button class="ml-1 w-[30px] flex items-center justify-center border-b-2 border-[#7f9cc8]" aria-label="Paint"><svg class="w-[18px] h-[17px]" viewBox="0 0 18 17"><path d="M1 9c1-4 5-6 9-5.500s6 3 5 6-4 2-5 3 0 3-3 3-7-2-6-6.500z" fill="#c9dcea"/><circle cx="4" cy="10" r="1.400" fill="#d8443a"/><circle cx="6" cy="6.500" r="1.300" fill="#4aa84a"/><circle cx="10" cy="6" r="1.300" fill="#e8b630"/><circle cx="6.500" cy="12.500" r="1.300" fill="#3b6fd0"/><path d="M17 1L8.500 12" stroke="#c77a3a" stroke-width="1.800"/><path d="M17.500 0l-2.500 2" stroke="#eed9b0" stroke-width="2.500"/></svg></button>
  <div class="grow"></div>
  <div class="flex items-center">
    <span class="w-[37px] h-4 border-2 border-white bg-linear-to-r from-[#159a49] from-60% to-black to-60% text-[10px] leading-3 text-center">63%</span><span class="w-0.5 h-1.5 bg-white"></span>
    <svg class="ml-[3px] w-2 h-3" viewBox="0 0 8 12" fill="#fff"><path d="M1.500 0H3v3h2V0h1.500v3H8v3L5.500 8.500H5V12H3V8.500h-.5L0 6V3h1.500z"/></svg>
    <svg class="ml-4 w-3 h-3" viewBox="0 0 12 12" fill="none" stroke="#ddd"><circle cx="4" cy="5.500" r="2"/><circle cx="9" cy="2.500" r="2"/><path d="M.5 11.500Q1 8 4 8t3.500 3.500M6.500 6Q9 4.500 11 6.500"/></svg>
    <svg class="ml-4 w-2.5 h-2" viewBox="0 0 10 8" fill="none" stroke="#eee" stroke-width="1.200"><path d="M1 6l4-4 4 4"/></svg>
    <svg class="ml-2 w-3 h-3" viewBox="0 0 12 12" fill="none" stroke="#eee"><path d="M5 3.500h6v6H3.500V7M12 5v3"/><path d="M6.500 5H10v3H6.500z" fill="#eee"/><path d="M1 1v2M3.500 1v2M0 3.500h4.500v1.500H0z"/></svg>
    <svg class="ml-2.5 w-2.5 h-3" viewBox="0 0 10 12" fill="none" stroke="#999"><path d="M.5 11Q1 2 10 1.500M3.500 11Q4 5 10 4.500M6 11Q6.500 8 10 7.500"/><circle cx="8.500" cy="10" r="1" fill="#eee"/></svg>
    <svg class="ml-1 w-3 h-3" viewBox="0 0 12 12" fill="none" stroke="#ddd"><path d="M.5 4h2L5 1.500v9L2.500 8h-2zM7 4q1 2 0 4M8.800 3q1.500 3 0 6"/><path d="M10.500 2q2 4 0 8" stroke="#888"/></svg>
    <span class="ml-[7px] text-[9px]">ENG</span>
    <span class="ml-[7px] w-12 flex flex-col items-center text-[8px] leading-[13px]"><span>22:51</span><span>08/09/2019</span></span>
    <button class="relative ml-3 mr-[18px] w-3 h-3" aria-label="Notifications: 1"><svg class="block w-3 h-3" viewBox="0 0 12 12"><path d="M0 0h12v9H6l-3 3V9H0z" fill="#fff"/><path d="M2 2.500h8M2 4.500h8M2 6.500h5" stroke="#222"/></svg><span class="absolute left-1.5 top-[5px] w-[11px] h-[11px] rounded-full border border-[#777] bg-[#333] leading-[9px] text-center">1</span></button>
  </div>
</div>
</body>
</html>
